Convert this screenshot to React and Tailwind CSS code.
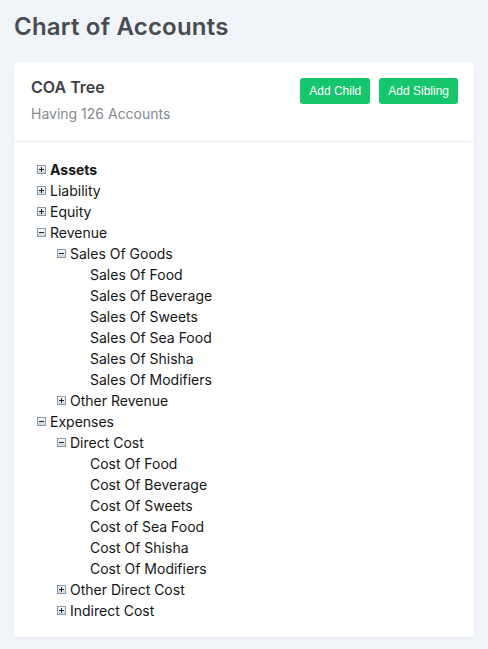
import React from 'react'

const tree = [
  { label: 'Assets', level: 0, icon: 'plus', bold: true },
  { label: 'Liability', level: 0, icon: 'plus' },
  { label: 'Equity', level: 0, icon: 'plus' },
  { label: 'Revenue', level: 0, icon: 'minus' },
  { label: 'Sales Of Goods', level: 1, icon: 'minus' },
  { label: 'Sales Of Food', level: 2 },
  { label: 'Sales Of Beverage', level: 2 },
  { label: 'Sales Of Sweets', level: 2 },
  { label: 'Sales Of Sea Food', level: 2 },
  { label: 'Sales Of Shisha', level: 2 },
  { label: 'Sales Of Modifiers', level: 2 },
  { label: 'Other Revenue', level: 1, icon: 'plus' },
  { label: 'Expenses', level: 0, icon: 'minus' },
  { label: 'Direct Cost', level: 1, icon: 'minus' },
  { label: 'Cost Of Food', level: 2 },
  { label: 'Cost Of Beverage', level: 2 },
  { label: 'Cost Of Sweets', level: 2 },
  { label: 'Cost of Sea Food', level: 2 },
  { label: 'Cost Of Shisha', level: 2 },
  { label: 'Cost Of Modifiers', level: 2 },
  { label: 'Other Direct Cost', level: 1, icon: 'plus' },
  { label: 'Indirect Cost', level: 1, icon: 'plus' },
]

const indent = ['pl-0', 'pl-5', 'pl-10']

function Toggle({ type }) {
  return (
    <svg width="9" height="9" viewBox="0 0 9 9" className="mr-[4px] shrink-0">
      <defs>
        <linearGradient id="tg" x1="0" y1="0" x2="0" y2="1">
          <stop offset="0" stopColor="#ffffff" />
          <stop offset="1" stopColor="#c9d3dd" />
        </linearGradient>
      </defs>
      <rect x="0.5" y="0.5" width="8" height="8" fill="url(#tg)" stroke="#8a9aab" />
      <path d="M2 4.5h5" stroke="#222" strokeWidth="1" />
      {type === 'plus' && <path d="M4.5 2v5" stroke="#222" strokeWidth="1" />}
    </svg>
  )
}

export default function App() {
  return (
    <div className="min-h-[649px] bg-[#f1f4f8] px-[14px] pt-[12px] pb-[13px] font-['Inter',sans-serif]">
      <h1 className="text-[24px] leading-[30px] font-semibold text-[#484c52] tracking-[0.2px]">Chart of Accounts</h1>

      <div className="mt-[20px] bg-white rounded-[4px] shadow-[0_1px_3px_rgba(0,0,0,0.06)]">
        <div className="flex justify-between items-start pl-[17px] pr-[16px] pt-[14px] pb-[17px] border-b border-[#e8ebef]">
          <div>
            <h2 className="text-[16px] leading-[22px] font-semibold text-[#3d4045]">COA Tree</h2>
            <p className="mt-[6px] text-[14px] leading-[20px] text-[#868a90]">Having 126 Accounts</p>
          </div>
          <div className="flex gap-[9px] pt-[2px]">
            <button className="h-[26px] px-[9px] rounded-[3px] bg-[#16c66c] text-white text-[12px] font-['Liberation_Sans',sans-serif]">Add Child</button>
            <button className="h-[26px] px-[9px] rounded-[3px] bg-[#16c66c] text-white text-[12px] font-['Liberation_Sans',sans-serif]">Add Sibling</button>
          </div>
        </div>

        <ul className="px-[23px] pt-[17px] pb-[16px]">
          {tree.map((n, i) => (
            <li key={i} className={`flex items-center h-[21px] ${indent[n.level]} text-[14px] text-[#151515] ${n.bold ? 'font-bold' : ''}`}>
              {n.icon ? <Toggle type={n.icon} /> : <span className="w-[13px] shrink-0" />}
              <span>{n.label}</span>
            </li>
          ))}
        </ul>
      </div>
    </div>
  )
}
